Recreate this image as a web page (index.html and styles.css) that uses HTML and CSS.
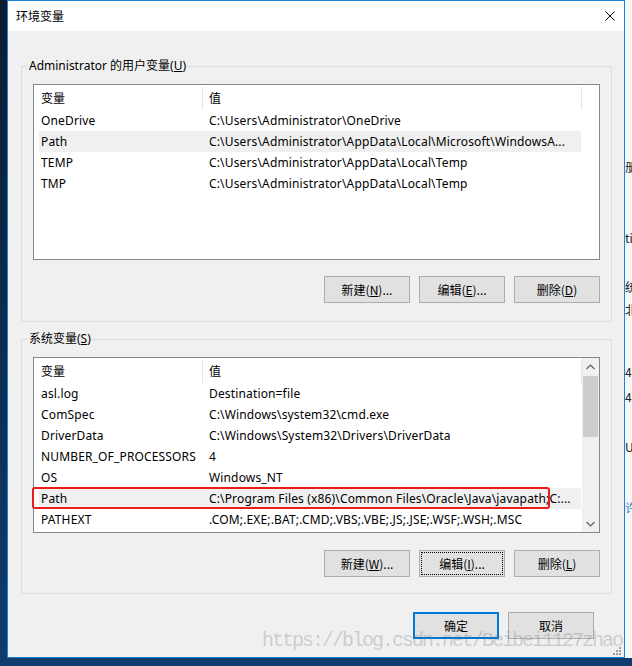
FILE: index.html
```html
<!DOCTYPE html>
<html lang="zh-CN">
<head>
<meta charset="utf-8">
<title>环境变量</title>
<link rel="stylesheet" href="styles.css">
</head>
<body>
<div class="desk">
  <div class="edge-left"></div>
  <div class="win">
    <div class="titlebar">
      <span class="title">环境变量</span>
      <svg class="close" width="10" height="10" viewBox="0 0 10 10"><path d="M0.5 0.5 L9.5 9.5 M9.5 0.5 L0.5 9.5" stroke="#000" stroke-width="1" fill="none"/></svg>
    </div>
    <div class="content">
      <fieldset class="group g1">
        <legend>Administrator 的用户变量(<u>U</u>)</legend>
        <div class="list">
          <div class="list-main">
            <div class="lhead"><div class="hc c1">变量</div><div class="hc c2">值</div></div>
            <div class="row"><div class="rc">OneDrive</div><div class="rc v">C:\Users\Administrator\OneDrive</div></div>
            <div class="row sel"><div class="rc">Path</div><div class="rc v">C:\Users\Administrator\AppData\Local\Microsoft\WindowsA...</div></div>
            <div class="row"><div class="rc">TEMP</div><div class="rc v">C:\Users\Administrator\AppData\Local\Temp</div></div>
            <div class="row"><div class="rc">TMP</div><div class="rc v">C:\Users\Administrator\AppData\Local\Temp</div></div>
          </div>
        </div>
        <div class="btns b1">
          <button class="btn">新建(<u>N</u>)...</button>
          <button class="btn">编辑(<u>E</u>)...</button>
          <button class="btn">删除(<u>D</u>)</button>
        </div>
      </fieldset>
      <fieldset class="group g2">
        <legend>系统变量(<u>S</u>)</legend>
        <div class="list l2">
          <div class="list-main">
            <div class="lhead"><div class="hc c1">变量</div><div class="hc c2">值</div></div>
            <div class="row"><div class="rc">asl.log</div><div class="rc v">Destination=file</div></div>
            <div class="row"><div class="rc">ComSpec</div><div class="rc v">C:\Windows\system32\cmd.exe</div></div>
            <div class="row"><div class="rc">DriverData</div><div class="rc v">C:\Windows\System32\Drivers\DriverData</div></div>
            <div class="row"><div class="rc">NUMBER_OF_PROCESSORS</div><div class="rc v">4</div></div>
            <div class="row"><div class="rc">OS</div><div class="rc v">Windows_NT</div></div>
            <div class="row sel"><div class="rc">Path</div><div class="rc v">C:\Program Files (x86)\Common Files\Oracle\Java\javapath;C:...</div></div>
            <div class="row"><div class="rc">PATHEXT</div><div class="rc v">.COM;.EXE;.BAT;.CMD;.VBS;.VBE;.JS;.JSE;.WSF;.WSH;.MSC</div></div>
          </div>
          <div class="vscroll">
            <div class="arrow"><svg width="9" height="6" viewBox="0 0 9 6"><path d="M0.5 5 L4.5 1 L8.5 5" stroke="#606060" stroke-width="1.2" fill="none"/></svg></div>
            <div class="track"><div class="thumb"></div></div>
            <div class="arrow"><svg width="9" height="6" viewBox="0 0 9 6"><path d="M0.5 1 L4.5 5 L8.5 1" stroke="#606060" stroke-width="1.2" fill="none"/></svg></div>
          </div>
          <div class="mark"></div>
        </div>
        <div class="btns b2">
          <button class="btn">新建(<u>W</u>)...</button>
          <button class="btn focus">编辑(<u>I</u>)...</button>
          <button class="btn">删除(<u>L</u>)</button>
        </div>
      </fieldset>
      <div class="dlg-btns">
        <button class="btn default">确定</button>
        <button class="btn">取消</button>
      </div>
    </div>
    <div class="watermark">https://blog.csdn.net/Beibei1127zhao</div>
    <svg class="grip" width="8" height="8" viewBox="0 0 8 8"><g fill="#a0a0a0"><rect x="6" y="0" width="2" height="2"/><rect x="3" y="3" width="2" height="2"/><rect x="6" y="3" width="2" height="2"/><rect x="0" y="6" width="2" height="2"/><rect x="3" y="6" width="2" height="2"/><rect x="6" y="6" width="2" height="2"/></g></svg>
  </div>
  <div class="edge-right">
    <span class="frag" style="top:160px">册</span>
    <span class="frag" style="top:231px">ti</span>
    <span class="frag" style="top:280px">统</span>
    <span class="frag" style="top:303px">北</span>
    <span class="frag" style="top:365px">48</span>
    <span class="frag" style="top:390px">48</span>
    <span class="frag" style="top:440px">U</span>
    <span class="frag blue" style="top:501px">许</span>
  </div>
</div>
</body>
</html>
```

FILE: styles.css
```css
* { box-sizing: border-box; }
html, body { margin: 0; padding: 0; }
body {
  width: 632px;
  height: 666px;
  overflow: hidden;
  background: linear-gradient(180deg, #0b1c31 0%, #0d2f55 60%, #0f3d6e 100%);
  font-family: "Noto Sans", "Noto Sans CJK SC", sans-serif;
  font-size: 12px;
  color: #000;
}
.desk {
  display: flex;
  height: 658px;
}
.edge-left { width: 7px; }
.win {
  position: relative;
  width: 618px;
  height: 658px;
  border: 1px solid #1883d7;
  background: #f0f0f0;
  display: flex;
  flex-direction: column;
}
.titlebar {
  height: 30px;
  background: #fff;
  display: flex;
  align-items: center;
  padding-left: 8px;
  padding-right: 9px;
}
.title { font-family: "Noto Sans CJK SC", sans-serif; font-size: 12px; line-height: 16px; }
.close { margin-left: auto; margin-top: -1px; }
.content { display: flex; flex-direction: column; }

.group {
  margin: 0 12px 0 13px;
  border: 1px solid #dcdcdc;
  padding: 10px 11px 18px 11px;
  min-width: 0;
}
.g1 { margin-top: 27px; }
.g2 { margin-top: 9px; padding-bottom: 16px; }
.group legend {
  padding: 0 1px;
  margin-left: -5px;
  line-height: 16px;
  height: 16px;
  white-space: nowrap;
}
.list {
  position: relative;
  height: 176px;
  border: 1px solid #828790;
  background: #fff;
  display: flex;
  overflow: visible;
}
.list-main { flex: 1; min-width: 0; overflow: hidden; }
.lhead {
  height: 25px;
  display: grid;
  grid-template-columns: 169px 379px;
}
.hc {
  padding-top: 2px;
  line-height: 23px;
  white-space: nowrap;
  border-right: 1px solid #e5e5e5;
  border-image: linear-gradient(#fff 0 2px, #e5e5e5 2px) 0 1 0 0 / 0 1px 0 0;
}
.hc.c1 { padding-left: 7px; }
.hc.c2 { padding-left: 6px; }
.row {
  margin-left: 5px;
  width: 542px;
  height: 21px;
  display: grid;
  grid-template-columns: 163px 379px;
  line-height: 21px;
  white-space: nowrap;
  letter-spacing: 0.15px;
}
.row.sel { background: #f0f0f0; }
.rc { padding-left: 2px; overflow: hidden; }
.rc.v { padding-left: 7px; }

.vscroll {
  width: 17px;
  background: #f0f0f0;
  display: flex;
  flex-direction: column;
}
.arrow {
  height: 17px;
  display: flex;
  align-items: center;
  justify-content: center;
}
.track { flex: 1; padding: 1px 1px 0 1px; }
.thumb { height: 61px; background: #cdcdcd; }
.mark {
  position: absolute;
  left: -2px;
  top: 129px;
  width: 518px;
  height: 22px;
  border: 2px solid #ec1c1c;
  border-radius: 3px;
}

.btns {
  display: flex;
  justify-content: flex-end;
  gap: 9px;
}
.b1 { margin-top: 16px; }
.b2 { margin-top: 17px; }
.btn {
  width: 86px;
  height: 27px;
  padding: 0;
  border: 1px solid #adadad;
  background: #e1e1e1;
  font-family: "Noto Sans CJK SC", "Noto Sans", sans-serif;
  font-size: 12px;
  color: #000;
  line-height: 16px;
}
.btn.focus { outline: 1px dotted #000; outline-offset: -3px; }
.btn.default { border: 2px solid #0078d7; }
.dlg-btns {
  margin-top: 18px;
  margin-right: 30px;
  display: flex;
  justify-content: flex-end;
  gap: 9px;
}
.watermark {
  position: absolute;
  left: 254px;
  top: 630px;
  font-family: "Liberation Mono", monospace;
  font-size: 20px;
  letter-spacing: -2px;
  line-height: 20px;
  color: rgba(110, 110, 110, 0.28);
  white-space: nowrap;
}
.grip { position: absolute; right: 3px; bottom: 2px; }
.edge-right {
  position: relative;
  width: 7px;
  height: 658px;
  background: #f7f7f7;
  overflow: hidden;
}
.frag {
  position: absolute;
  left: 0;
  font-family: "Noto Sans CJK SC", sans-serif;
  font-size: 12px;
  line-height: 14px;
  color: #222;
}
.frag.blue { color: #3a7bd5; }
```
